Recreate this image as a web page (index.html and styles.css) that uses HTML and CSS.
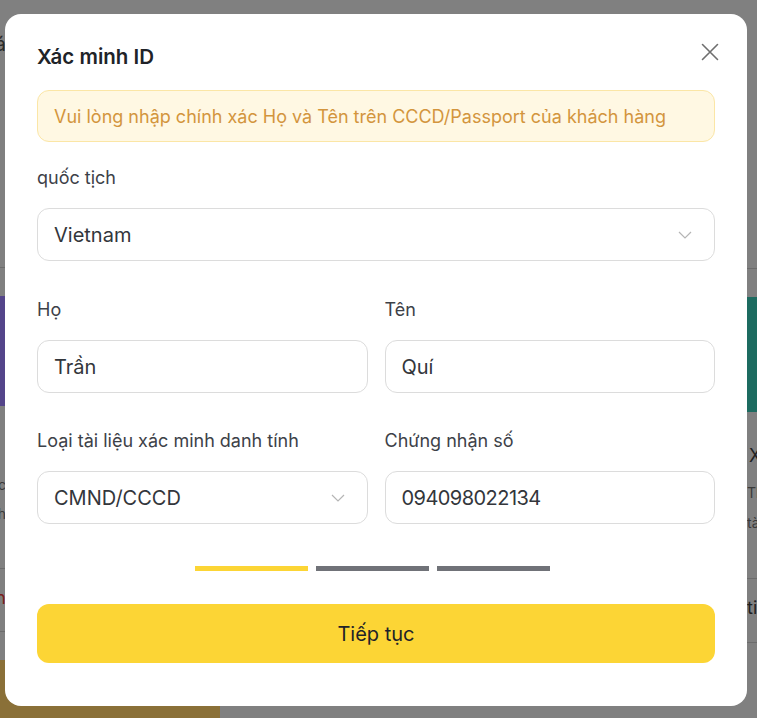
FILE: index.html
```html
<!DOCTYPE html>
<html lang="vi">
<head>
<meta charset="utf-8">
<title>Xác minh ID</title>
<link rel="stylesheet" href="styles.css">
</head>
<body>
<div class="bg">
  <div class="bg-col bg-left">
    <div class="bg-head"><span>Ưu đãi nổi bật tháng này dành cho bạn đá</span></div>
    <div class="bg-rule bg-r1"></div>
    <div class="bg-img purple"></div>
    <div class="bg-t1"><span>Tài khoản đầu tư lãi suất hấp dẫn c</span></div>
    <div class="bg-t2"><span>nhận ưu đãi ngay hôm nay h</span></div>
    <div class="bg-rule bg-r2"></div>
    <div class="bg-t3"><span>Xem thêm n</span></div>
    <div class="bg-rule bg-r3"></div>
    <div class="bg-img gold"></div>
  </div>
  <div class="bg-col bg-right">
    <div class="bg-head"></div>
    <div class="bg-rule bg-r1"></div>
    <div class="bg-img teal"></div>
    <div class="bg-title">Xác thực</div>
    <div class="bg-t1">Thông tin</div>
    <div class="bg-t2">tài khoản</div>
    <div class="bg-rule bg-r2"></div>
    <div class="bg-t3">tiếp</div>
    <div class="bg-rule bg-r3"></div>
  </div>
</div>

<div class="overlay">
  <div class="modal">
    <div class="modal-head">
      <h1 class="modal-title">Xác minh ID</h1>
      <button class="close" aria-label="Đóng">
        <svg width="18" height="18" viewBox="0 0 18 18"><path d="M1.5 1.5 L16.5 16.5 M16.5 1.5 L1.5 16.5" stroke="#6f6f6f" stroke-width="1.6" fill="none" stroke-linecap="round"/></svg>
      </button>
    </div>

    <div class="notice">Vui lòng nhập chính xác Họ và Tên trên CCCD/Passport của khách hàng</div>

    <div class="field first">
      <label class="label">quốc tịch</label>
      <div class="control select">
        <span>Vietnam</span>
        <svg class="chev" width="14" height="8" viewBox="0 0 14 8"><path d="M1 1 L7 7 L13 1" stroke="#b5b5b5" stroke-width="1.2" fill="none"/></svg>
      </div>
    </div>

    <div class="row r2">
      <div class="field">
        <label class="label">Họ</label>
        <div class="control"><span>Trần</span></div>
      </div>
      <div class="field">
        <label class="label">Tên</label>
        <div class="control"><span>Quí</span></div>
      </div>
    </div>

    <div class="row r3">
      <div class="field">
        <label class="label">Loại tài liệu xác minh danh tính</label>
        <div class="control select">
          <span>CMND/CCCD</span>
          <svg class="chev" width="14" height="8" viewBox="0 0 14 8"><path d="M1 1 L7 7 L13 1" stroke="#b5b5b5" stroke-width="1.2" fill="none"/></svg>
        </div>
      </div>
      <div class="field">
        <label class="label">Chứng nhận số</label>
        <div class="control"><span class="num">094098022134</span></div>
      </div>
    </div>

    <div class="steps">
      <span class="step active"></span>
      <span class="step"></span>
      <span class="step"></span>
    </div>

    <button class="primary">Tiếp tục</button>
  </div>
</div>
</body>
</html>
```

FILE: styles.css
```css
* { box-sizing: border-box; }
html, body { margin: 0; padding: 0; }
body {
  width: 757px;
  height: 718px;
  overflow: hidden;
  background: #808080;
  font-family: Inter, "Noto Sans", sans-serif;
}

/* dimmed page behind the dialog */
.bg {
  display: flex;
  justify-content: space-between;
  height: 718px;
  overflow: hidden;
}
.bg-col {
  display: flex;
  flex-direction: column;
  width: 220px;
  flex: none;
}
.bg-left { align-items: flex-end; }
.bg-right { width: 10px; align-items: flex-start; overflow: visible; }
.bg-left > div { width: 220px; display: flex; justify-content: flex-end; white-space: nowrap; overflow: hidden; }
.bg-left > div > span { padding-right: 214px; }
.bg-head { height: 70px; padding-top: 32px; font-size: 20px; color: #2a2a2a; line-height: 24px; }
.bg-rule { height: 1px; background: #6c6c6c; width: 100%; }
.bg-r1 { margin-top: 198px; }
.bg-img { height: 115px; width: 100%; margin-top: 28px; }
.bg-img.purple { background: #54458a; }
.bg-img.teal { background: #1d6b60; width: 220px; }
.bg-img.gold { background: #8a7038; height: 60px; margin-top: 28px; }
.bg-title { margin-top: 32px; font-size: 18px; color: #222; line-height: 24px; white-space: nowrap; padding-left: 2px; }
.bg-t1, .bg-t2 { font-size: 14px; color: #3a3a3a; line-height: 30px; white-space: nowrap; }
.bg-left .bg-t1 { margin-top: 64px; }
.bg-right .bg-t1 { margin-top: 10px; }
.bg-r2 { margin-top: 40px; }
.bg-t3 { margin-top: 15px; font-size: 18px; line-height: 28px; color: #1e1e1e; white-space: nowrap; }
.bg-left .bg-t3 { color: #7a1e1e; }
.bg-r3 { margin-top: 20px; }
.bg-right .bg-rule { width: 220px; }

/* overlay + dialog */
.overlay {
  position: fixed;
  inset: 0;
}
.modal {
  width: 742px;
  height: 692px;
  margin: 14px 0 0 5px;
  background: #fff;
  border-radius: 16px;
  padding: 28px 32px 0;
  display: flex;
  flex-direction: column;
}
.modal-head {
  display: flex;
  justify-content: space-between;
  align-items: flex-start;
  height: 30px;
}
.modal-title {
  margin: 0;
  font-size: 20.5px;
  line-height: 30px;
  font-weight: 600;
  color: #202328;
}
.close {
  border: 0;
  background: none;
  padding: 0;
  margin: 1px -4px 0 0;
  width: 18px;
  height: 18px;
  display: flex;
}

.notice {
  margin-top: 18px;
  height: 52px;
  border: 1px solid #fbe6a6;
  background: #fff8e3;
  border-radius: 12px;
  padding: 0 16px;
  display: flex;
  align-items: center;
  font-size: 18px;
  color: #d3953d;
}

.field {
  display: flex;
  flex-direction: column;
  gap: 17px;
  min-width: 0;
}
.field.first { margin-top: 23px; }
.label {
  font-size: 18px;
  line-height: 26px;
  color: #3d4148;
}
.control {
  height: 53px;
  border: 1px solid #dcdcdc;
  border-radius: 12px;
  padding: 0 22px 0 16px;
  display: flex;
  align-items: center;
  justify-content: space-between;
  font-size: 20px;
  color: #33363b;
}
.num { letter-spacing: -0.55px; }
.chev { flex: none; }

.row {
  display: grid;
  grid-template-columns: 1fr 1fr;
  column-gap: 17px;
}
.r2 { margin-top: 36px; }
.r3 { margin-top: 35px; }

.steps {
  margin-top: 42px;
  display: flex;
  justify-content: center;
  gap: 8px;
  padding-right: 8px;
}
.step {
  width: 113px;
  height: 5px;
  background: #707278;
}
.step.active { background: #fcd535; }

.primary {
  margin-top: 33px;
  height: 59px;
  border: 0;
  border-radius: 12px;
  background: #fcd535;
  font-family: inherit;
  font-size: 20px;
  color: #1e2329;
}
```
